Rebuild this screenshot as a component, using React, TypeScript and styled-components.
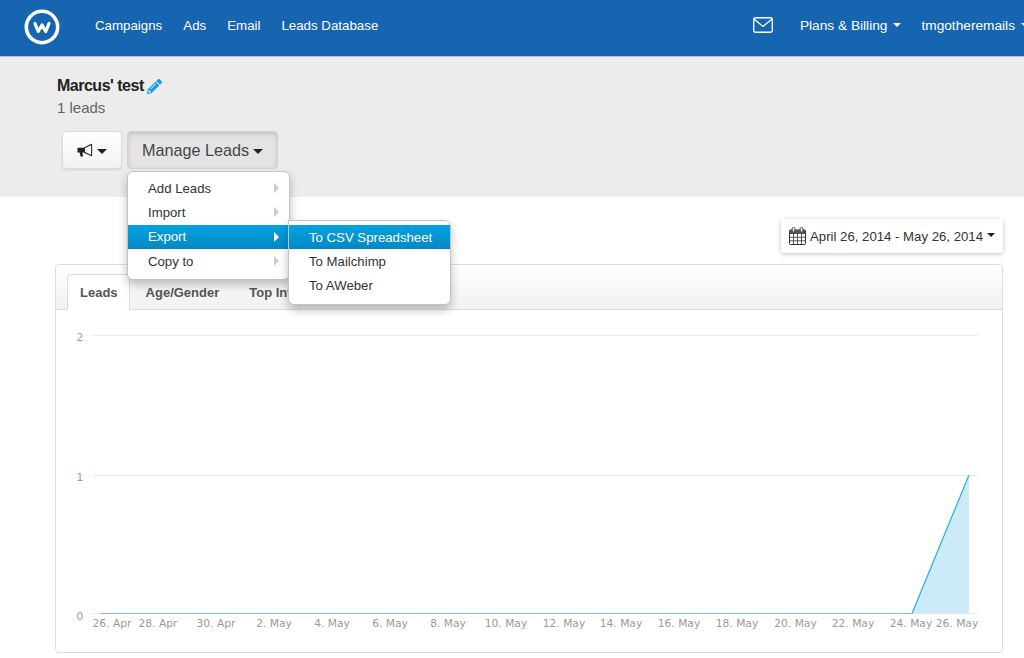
import { FaPencilAlt } from "react-icons/fa";
import styled, { createGlobalStyle } from "styled-components";

const GlobalStyle = createGlobalStyle`
  html, body {
    margin: 0;
    padding: 0;
    background: #fff;
    font-family: "Liberation Sans", Arial, sans-serif;
    color: #333;
  }
  * {
    box-sizing: border-box;
  }
`;

const Page = styled.div`
  width: 1024px;
  height: 658px;
  overflow: hidden;
`;

const Navbar = styled.nav`
  height: 57px;
  background: #1665b0;
  border-bottom: 1px solid #a9c4df;
  display: flex;
  align-items: center;
  padding: 0 0 2px 24px;
  overflow: hidden;
  white-space: nowrap;
`;

const Logo = styled.svg`
  width: 36px;
  height: 36px;
  flex: none;
  margin-right: 35px;
`;

const NavLinks = styled.div`
  display: flex;
  gap: 21px;
  margin-bottom: 4px;
`;

const NavRight = styled.div`
  display: flex;
  align-items: center;
  gap: 20px;
  margin: 0 -5px 4px auto;
`;

const NavLink = styled.a`
  color: #fff;
  font-size: 13.3px;
  display: inline-flex;
  align-items: center;
  gap: 6px;
`;

const AccountLink = styled(NavLink)`
  font-size: 13.7px;
`;

const NavCaret = styled.span`
  width: 0;
  height: 0;
  border-left: 4px solid transparent;
  border-right: 4px solid transparent;
  border-top: 4px solid #fff;
`;

const MailIcon = styled.svg`
  width: 20px;
  height: 16px;
  margin-right: 7px;
`;

const SubHeader = styled.header`
  height: 140px;
  background: #ececec;
  padding: 18px 0 0 57px;
`;

const Title = styled.h1`
  margin: 0;
  font-size: 16px;
  line-height: 22px;
  font-weight: 700;
  color: #222;
  letter-spacing: -0.5px;
  display: flex;
  align-items: center;
  gap: 3px;
`;

const PencilIcon = styled(FaPencilAlt)`
  color: #1a9ee2;
  font-size: 15px;
`;

const LeadCount = styled.p`
  margin: 0;
  font-size: 15px;
  line-height: 22px;
  color: #666;
`;

const Toolbar = styled.div`
  position: relative;
  display: flex;
  gap: 5px;
  margin: 12px 0 0 5px;
`;

const ToolButton = styled.button<{ $active?: boolean }>`
  height: 38px;
  padding: 0 14px;
  display: flex;
  align-items: center;
  gap: 4px;
  border-radius: 4px;
  font-family: inherit;
  font-size: 16.2px;
  color: #444;
  white-space: nowrap;
  border: 1px solid ${(p) => (p.$active ? "#d2d2d2" : "#dcdcdc")};
  background: ${(p) => (p.$active ? "#e4e4e4" : "linear-gradient(#fff, #f2f2f2)")};
  box-shadow: ${(p) =>
    p.$active
      ? "inset 0 2px 4px rgba(0, 0, 0, 0.15)"
      : "0 1px 2px rgba(0, 0, 0, 0.12)"};
`;

const IconButton = styled(ToolButton)`
  width: 60px;
  justify-content: center;
  color: #333;
`;

const Manage = styled(ToolButton)`
  width: 151px;
`;

const Caret = styled.span`
  width: 0;
  height: 0;
  margin-top: 3px;
  border-left: 5px solid transparent;
  border-right: 5px solid transparent;
  border-top: 5px solid #222;
`;

const Menu = styled.ul`
  position: absolute;
  z-index: 5;
  margin: 0;
  padding: 4px 0 6px;
  width: 163px;
  list-style: none;
  background: #fff;
  border: 1px solid #c4c4c4;
  border-radius: 6px;
  box-shadow: 0 5px 10px rgba(0, 0, 0, 0.25);
`;

const MainMenu = styled(Menu)`
  left: 65px;
  top: 40px;
`;

const SubMenu = styled(Menu)`
  left: 226px;
  top: 89px;
  border-top-left-radius: 0;
`;

const MenuRow = styled.li<{ $selected?: boolean }>`
  height: 24.33px;
  padding: 0 10px 0 20px;
  display: flex;
  align-items: center;
  justify-content: space-between;
  font-size: 13.2px;
  color: ${(p) => (p.$selected ? "#fff" : "#333")};
  background: ${(p) => (p.$selected ? "linear-gradient(#05a3e0, #0388c4)" : "none")};
`;

const MenuArrow = styled.span<{ $selected?: boolean }>`
  width: 0;
  height: 0;
  border-top: 5px solid transparent;
  border-bottom: 5px solid transparent;
  border-left: 5px solid ${(p) => (p.$selected ? "#fff" : "#ccc")};
`;

const Main = styled.main`
  padding: 22px 21px 0 55px;
  display: flex;
  flex-direction: column;
  align-items: flex-end;
`;

const DateButton = styled.button`
  width: 222px;
  height: 34px;
  padding: 0 0 0 8px;
  display: flex;
  align-items: center;
  gap: 4px;
  border: 0;
  border-radius: 2px;
  background: #fff;
  box-shadow: 0 1px 4px rgba(0, 0, 0, 0.25);
  font-family: inherit;
  font-size: 13.2px;
  color: #333;
  white-space: nowrap;
`;

const SmallCaret = styled(Caret)`
  margin: -2px 0 0 0;
  border-left-width: 4px;
  border-right-width: 4px;
  border-top-width: 4px;
`;

const Panel = styled.section`
  width: 948px;
  height: 389px;
  margin-top: 11px;
  border: 1px solid #ddd;
  border-radius: 4px;
  overflow: hidden;
`;

const TabBar = styled.div`
  height: 45px;
  padding: 9px 0 0 11px;
  display: flex;
  gap: 2px;
  background: linear-gradient(#fff, #f1f1f1);
  border-bottom: 1px solid #ddd;
`;

const Tab = styled.div<{ $active?: boolean }>`
  height: 36px;
  padding: 0 14px;
  display: flex;
  align-items: center;
  font-size: 13px;
  font-weight: 700;
  color: #555;
  ${(p) =>
    p.$active &&
    `
    padding: 0 11px 0 12px;
    background: #fff;
    border: 1px solid #ddd;
    border-bottom: 0;
    border-radius: 4px 4px 0 0;
  `}
`;

const Chart = styled.svg`
  display: block;
  width: 946px;
  height: 342px;
`;

const AxisLabel = styled.text`
  font-family: "DejaVu Sans", sans-serif;
  font-size: 10.7px;
  fill: #999;
`;

const ticks: [string, number][] = [
  ["26. Apr", 112],
  ["28. Apr", 158],
  ["30. Apr", 216],
  ["2. May", 274],
  ["4. May", 332],
  ["6. May", 390],
  ["8. May", 448],
  ["10. May", 506],
  ["12. May", 564],
  ["14. May", 621],
  ["16. May", 679],
  ["18. May", 737],
  ["20. May", 795.5],
  ["22. May", 853],
  ["24. May", 911],
  ["26. May", 957],
];

const gridLines: [string, number, number][] = [
  ["2", 335.5, 341],
  ["1", 475.5, 481],
  ["0", 613.5, 620],
];

function App() {
  return (
    <Page>
      <GlobalStyle />
      <Navbar>
        <Logo viewBox="0 0 36 36">
          <circle cx="18" cy="18" r="15.7" fill="none" stroke="#fff" strokeWidth="3.6" />
          <path
            d="M11 14.5 L14.2 22.5 L18 16 L21.8 22.5 L25 14.5"
            fill="none"
            stroke="#fff"
            strokeWidth="3.2"
            strokeLinejoin="round"
            strokeLinecap="round"
          />
        </Logo>
        <NavLinks>
          <NavLink>Campaigns</NavLink>
          <NavLink>Ads</NavLink>
          <NavLink>Email</NavLink>
          <NavLink>Leads Database</NavLink>
        </NavLinks>
        <NavRight>
          <MailIcon viewBox="0 0 20 16">
            <rect x="0.75" y="0.75" width="18.5" height="14.5" rx="1.5" fill="none" stroke="#fff" strokeWidth="1.3" />
            <path d="M1 2 L10 9.5 L19 2" fill="none" stroke="#fff" strokeWidth="1.3" />
          </MailIcon>
          <AccountLink>
            Plans &amp; Billing <NavCaret />
          </AccountLink>
          <AccountLink>
            tmgotheremails <NavCaret />
          </AccountLink>
        </NavRight>
      </Navbar>

      <SubHeader>
        <Title>
          Marcus' test <PencilIcon />
        </Title>
        <LeadCount>1 leads</LeadCount>
        <Toolbar>
          <IconButton>
            <svg width="17" height="15" viewBox="0 0 17 15">
              <path d="M0.5 4.5H8V9.5H5.6L6.6 14H3.8L2.8 9.5H0.5Z" fill="#222" />
              <path d="M8 4.5L15.5 1V13L8 9.5Z" fill="none" stroke="#333" strokeWidth="1.2" strokeLinejoin="round" />
            </svg>
            <Caret />
          </IconButton>
          <Manage $active>
            Manage Leads <Caret />
          </Manage>
          <MainMenu>
            <MenuRow>
              Add Leads <MenuArrow />
            </MenuRow>
            <MenuRow>
              Import <MenuArrow />
            </MenuRow>
            <MenuRow $selected>
              Export <MenuArrow $selected />
            </MenuRow>
            <MenuRow>
              Copy to <MenuArrow />
            </MenuRow>
          </MainMenu>
          <SubMenu>
            <MenuRow $selected>To CSV Spreadsheet</MenuRow>
            <MenuRow>To Mailchimp</MenuRow>
            <MenuRow>To AWeber</MenuRow>
          </SubMenu>
        </Toolbar>
      </SubHeader>

      <Main>
        <DateButton>
          <svg width="17" height="18" viewBox="0 0 17 18">
            <rect x="0.5" y="3" width="16" height="14.5" rx="1" fill="none" stroke="#333" />
            <rect x="0.5" y="3" width="16" height="4" fill="#555" />
            <path
              d="M0.5 10.3H16.5M0.5 13.8H16.5M4.5 7V17.5M8.5 7V17.5M12.5 7V17.5"
              stroke="#333"
              strokeWidth="0.8"
            />
            <rect x="3.2" y="0.5" width="2.6" height="4.5" rx="1.2" fill="#fff" stroke="#333" strokeWidth="0.9" />
            <rect x="11.2" y="0.5" width="2.6" height="4.5" rx="1.2" fill="#fff" stroke="#333" strokeWidth="0.9" />
          </svg>
          April 26, 2014 - May 26, 2014 <SmallCaret />
        </DateButton>
        <Panel>
          <TabBar>
            <Tab $active>Leads</Tab>
            <Tab>Age/Gender</Tab>
            <Tab>Top Interests</Tab>
          </TabBar>
          <Chart viewBox="56 310 946 342">
            {gridLines.map(([label, y, textY]) => (
              <g key={label}>
                <line x1="92" x2="978" y1={y} y2={y} stroke="#eee" />
                <AxisLabel x="80" y={textY} textAnchor="middle">
                  {label}
                </AxisLabel>
              </g>
            ))}
            <polygon points="912,613.5 969,475 969,613.5" fill="#cdeaf9" />
            <polyline points="100,613.5 912,613.5" fill="none" stroke="#7cc3e2" strokeWidth="1.2" />
            <polyline points="912,613.5 969,475" fill="none" stroke="#25aee6" strokeWidth="1.2" />
            {ticks.map(([label, x]) => (
              <AxisLabel key={label} x={x} y="627" textAnchor="middle">
                {label}
              </AxisLabel>
            ))}
          </Chart>
        </Panel>
      </Main>
    </Page>
  );
}

export default App;
